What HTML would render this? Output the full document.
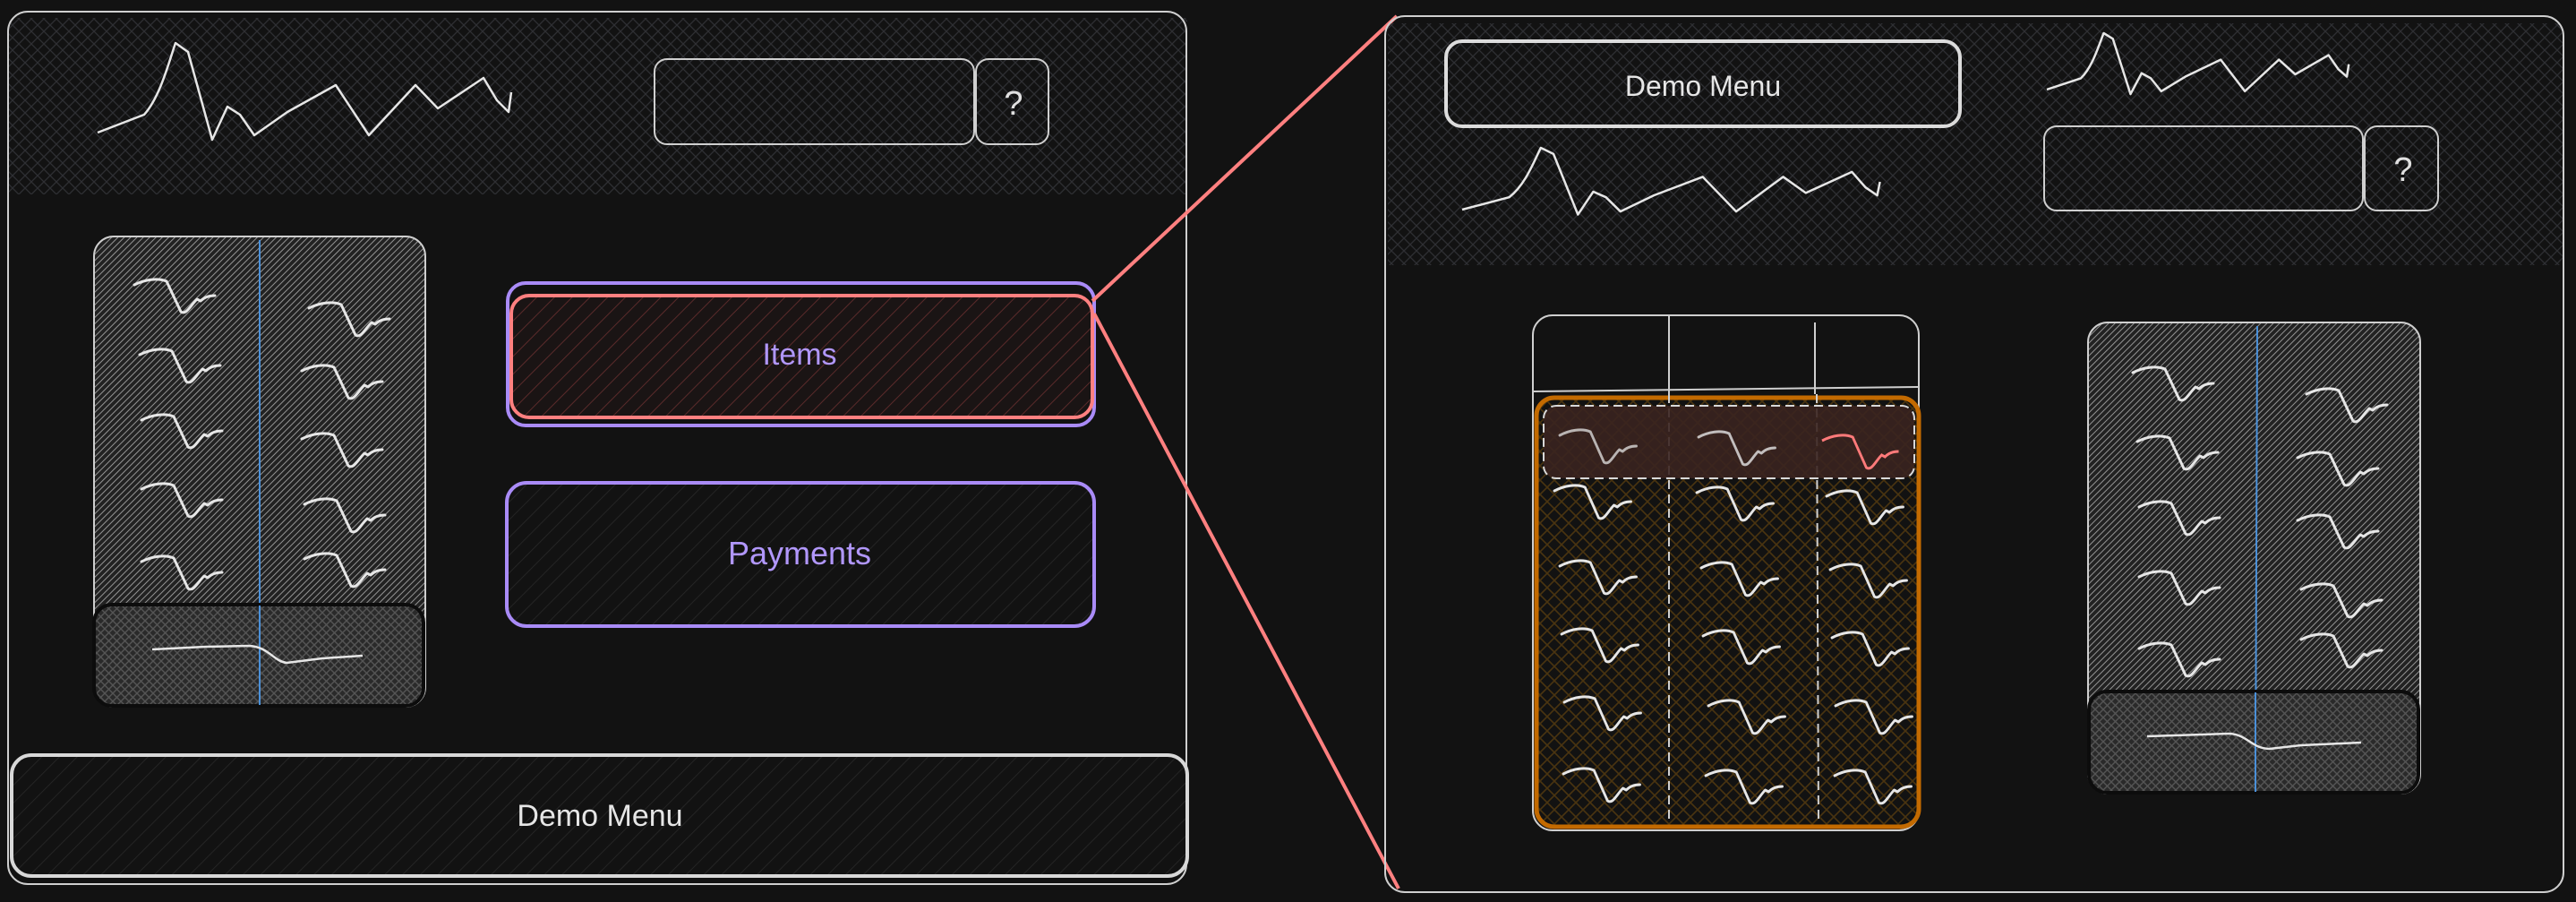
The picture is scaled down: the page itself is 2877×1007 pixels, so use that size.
<!DOCTYPE html>
<html><head><meta charset="utf-8"><style>
html,body{margin:0;padding:0;background:#121212;width:2877px;height:1007px;overflow:hidden}
svg{display:block}
text{font-family:"Liberation Sans",sans-serif}
</style></head><body>
<svg width="2877" height="1007" viewBox="0 0 2877 1007" xmlns="http://www.w3.org/2000/svg">
<defs>
<pattern id="xh" width="14" height="14" patternUnits="userSpaceOnUse">
<path d="M0,0L14,14M14,0L0,14" stroke="#2e2f33" stroke-width="1.3" fill="none"/>
</pattern>
<pattern id="dg" width="5" height="5" patternUnits="userSpaceOnUse" patternTransform="rotate(45)">
<rect width="5" height="5" fill="#222"/>
<line x1="0" y1="0" x2="0" y2="5" stroke="#9a9a9a" stroke-width="1.9"/>
</pattern>
<pattern id="dk" width="14" height="14" patternUnits="userSpaceOnUse" patternTransform="rotate(45)">
<line x1="0" y1="0" x2="0" y2="14" stroke="#2a2a2a" stroke-width="1.5"/>
</pattern>
<pattern id="rd" width="14" height="14" patternUnits="userSpaceOnUse" patternTransform="rotate(45)">
<rect width="14" height="14" fill="#1a1414"/>
<line x1="0" y1="0" x2="0" y2="14" stroke="#5a2a2a" stroke-width="2"/>
</pattern>
<pattern id="ft" width="9" height="9" patternUnits="userSpaceOnUse">
<rect width="9" height="9" fill="#2a2a2a"/>
<path d="M0,0L9,9M9,0L0,9" stroke="#555" stroke-width="1.4" fill="none"/>
</pattern>
<pattern id="or" width="16" height="16" patternUnits="userSpaceOnUse">
<path d="M0,0L16,16M16,0L0,16" stroke="#4a3410" stroke-width="1.6" fill="none"/>
</pattern>
<g id="sq"><path d="M0,6 C12,0 26,-2 36,2 L52,36 C58,40 62,30 70,22 L74,24 C78,20 84,18 90,18" fill="none" stroke="#e6e6e6" stroke-width="3" stroke-linecap="round" stroke-linejoin="round"/></g>
<g id="logo"><path d="M0,100 L52,80 C70,60 80,20 87,0 L101,10 L128,108 L145,71 L159,80 L175,103 L212,77 L266,47 L303,103 L355,47 L380,73 L431,39 L446,64 L459,77 L462,55" fill="none" stroke="#e6e6e6" stroke-width="2.5" stroke-linejoin="round" vector-effect="non-scaling-stroke"/></g>
</defs>
<rect width="2877" height="1007" fill="#121212"/>

<rect x="10" y="20" width="1316" height="197" fill="url(#xh)"/>
<rect x="9" y="13" width="1316" height="974" rx="22" fill="none" stroke="#cfcfcf" stroke-width="2"/>
<use href="#logo" transform="translate(109,48)"/>
<rect x="731" y="66" width="357" height="95" rx="14" fill="none" stroke="#cfcfcf" stroke-width="2"/>
<rect x="1090" y="66" width="81" height="95" rx="14" fill="none" stroke="#cfcfcf" stroke-width="2"/>
<text x="1132" y="128" font-size="38" fill="#e0e0e0" text-anchor="middle">?</text>

<rect x="105" y="264" width="370" height="525" rx="22" fill="url(#dg)" stroke="#cfcfcf" stroke-width="2"/>
<line x1="290" y1="268" x2="290" y2="787" stroke="#4a90d9" stroke-width="2"/>
<rect x="105" y="675" width="368" height="113" rx="20" fill="url(#ft)" stroke="#0c0c0c" stroke-width="4"/>
<line x1="290" y1="676" x2="290" y2="787" stroke="#4a90d9" stroke-width="2"/>
<path d="M170,725 L230,722 L278,721 C300,722 305,738 320,740 L360,735 L405,732" fill="none" stroke="#e6e6e6" stroke-width="2.5"/>
<use href="#sq" transform="translate(150,312)"/><use href="#sq" transform="translate(156,390)"/><use href="#sq" transform="translate(158,463)"/><use href="#sq" transform="translate(158,540)"/><use href="#sq" transform="translate(158,621)"/>
<use href="#sq" transform="translate(345,338)"/><use href="#sq" transform="translate(337,408)"/><use href="#sq" transform="translate(337,484)"/><use href="#sq" transform="translate(340,557)"/><use href="#sq" transform="translate(340,618)"/>

<rect x="567" y="316" width="655" height="159" rx="20" fill="none" stroke="#a98bf7" stroke-width="4"/>
<rect x="571" y="330" width="649" height="136" rx="20" fill="url(#rd)" stroke="#ff8080" stroke-width="4"/>
<text x="893" y="407" font-size="34" fill="#b197fc" text-anchor="middle">Items</text>
<rect x="566" y="539" width="656" height="160" rx="22" fill="url(#dk)" stroke="#a98bf7" stroke-width="4"/>
<text x="893" y="630" font-size="36" fill="#b197fc" text-anchor="middle">Payments</text>
<rect x="13" y="843" width="1313" height="135" rx="22" fill="url(#dk)" stroke="#d8d8d8" stroke-width="4"/>
<text x="670" y="922" font-size="34" fill="#e6e6e6" text-anchor="middle">Demo Menu</text>

<line x1="1220" y1="336" x2="1560" y2="18" stroke="#ff8080" stroke-width="4"/>
<line x1="1222" y1="350" x2="1562" y2="992" stroke="#ff8080" stroke-width="4"/>

<rect x="1550" y="26" width="1312" height="270" fill="url(#xh)"/>
<rect x="1547" y="18" width="1316" height="978" rx="22" fill="none" stroke="#cfcfcf" stroke-width="2"/>
<rect x="1615" y="46" width="574" height="95" rx="18" fill="none" stroke="#dcdcdc" stroke-width="4"/>
<text x="1902" y="107" font-size="32" fill="#e6e6e6" text-anchor="middle">Demo Menu</text>
<use href="#logo" transform="translate(2286,37) scale(0.73,0.63)"/>
<use href="#logo" transform="translate(1633,165) scale(1.01,0.69)"/>
<rect x="2283" y="141" width="356" height="94" rx="14" fill="none" stroke="#cfcfcf" stroke-width="2"/>
<rect x="2641" y="141" width="82" height="94" rx="14" fill="none" stroke="#cfcfcf" stroke-width="2"/>
<text x="2684" y="202" font-size="38" fill="#e0e0e0" text-anchor="middle">?</text>

<rect x="1712" y="352" width="431" height="575" rx="22" fill="none" stroke="#cfcfcf" stroke-width="2"/>
<line x1="1713" y1="437" x2="2142" y2="432" stroke="#cfcfcf" stroke-width="2"/>
<line x1="1864" y1="353" x2="1864" y2="440" stroke="#cfcfcf" stroke-width="2"/>
<line x1="2027" y1="360" x2="2027" y2="440" stroke="#cfcfcf" stroke-width="2"/>
<rect x="1716" y="444" width="427" height="479" rx="20" fill="url(#or)" stroke="#c36a00" stroke-width="5"/>
<line x1="1864" y1="440" x2="1864" y2="920" stroke="#d0d0d0" stroke-width="2" stroke-dasharray="10 6"/>
<line x1="2029" y1="440" x2="2031" y2="920" stroke="#d0d0d0" stroke-width="2" stroke-dasharray="10 6"/>
<rect x="1724" y="453" width="414" height="81" rx="14" fill="#3a2420" fill-opacity="0.9" stroke="#d8d8d8" stroke-width="2" stroke-dasharray="10 6"/>
<use href="#sq" transform="translate(1742,480) scale(0.95,1)" opacity="0.75"/>
<use href="#sq" transform="translate(1897,482) scale(0.95,1)" opacity="0.8"/>
<g transform="translate(2035,486) scale(0.95,1)"><path d="M0,6 C12,0 26,-2 36,2 L52,36 C58,40 62,30 70,22 L74,24 C78,20 84,18 90,18" fill="none" stroke="#ff7a7a" stroke-width="3"/></g>
<use href="#sq" transform="translate(1736,542) scale(0.95,1)"/><use href="#sq" transform="translate(1895,544) scale(0.95,1)"/><use href="#sq" transform="translate(2040,548) scale(0.95,1)"/>
<use href="#sq" transform="translate(1742,626) scale(0.95,1)"/><use href="#sq" transform="translate(1900,628) scale(0.95,1)"/><use href="#sq" transform="translate(2044,630) scale(0.95,1)"/>
<use href="#sq" transform="translate(1744,702) scale(0.95,1)"/><use href="#sq" transform="translate(1902,704) scale(0.95,1)"/><use href="#sq" transform="translate(2046,706) scale(0.95,1)"/>
<use href="#sq" transform="translate(1747,778) scale(0.95,1)"/><use href="#sq" transform="translate(1908,782) scale(0.95,1)"/><use href="#sq" transform="translate(2050,782) scale(0.95,1)"/>
<use href="#sq" transform="translate(1746,858) scale(0.95,1)"/><use href="#sq" transform="translate(1905,860) scale(0.95,1)"/><use href="#sq" transform="translate(2049,860) scale(0.95,1)"/>

<rect x="2332" y="360" width="371" height="526" rx="22" fill="url(#dg)" stroke="#cfcfcf" stroke-width="2"/>
<line x1="2521" y1="364" x2="2519" y2="884" stroke="#4a90d9" stroke-width="2"/>
<rect x="2333" y="772" width="368" height="113" rx="20" fill="url(#ft)" stroke="#0c0c0c" stroke-width="4"/>
<line x1="2519" y1="773" x2="2519" y2="884" stroke="#4a90d9" stroke-width="2"/>
<path d="M2398,822 L2460,820 L2490,819 C2510,820 2515,836 2535,836 L2570,832 L2637,829" fill="none" stroke="#e6e6e6" stroke-width="2.5"/>
<use href="#sq" transform="translate(2382,410)"/><use href="#sq" transform="translate(2387,487)"/><use href="#sq" transform="translate(2389,560)"/><use href="#sq" transform="translate(2389,638)"/><use href="#sq" transform="translate(2389,718)"/>
<use href="#sq" transform="translate(2576,434)"/><use href="#sq" transform="translate(2566,505)"/><use href="#sq" transform="translate(2566,575)"/><use href="#sq" transform="translate(2570,652)"/><use href="#sq" transform="translate(2570,708)"/>
</svg>
</body></html>
